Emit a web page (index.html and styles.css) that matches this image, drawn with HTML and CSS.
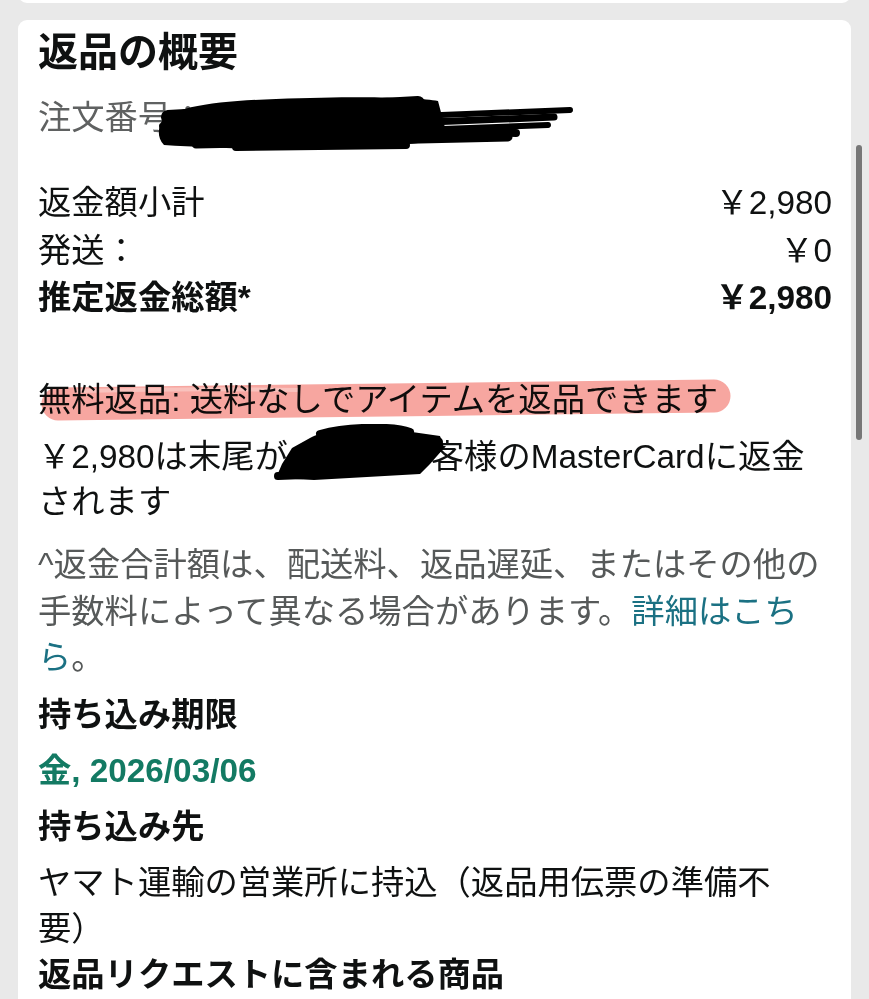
FILE: index.html
```html
<!DOCTYPE html>
<html lang="ja">
<head>
<meta charset="utf-8">
<title>返品の概要</title>
<link rel="stylesheet" href="styles.css">
</head>
<body>
<div class="page">
  <div class="card card-prev"></div>
  <section class="card summary">
    <h1 class="title">返品の概要</h1>
    <p class="order">注文番号：<span class="redact redact-order"><svg width="420" height="58" viewBox="0 0 420 58"><path d="M4 30 C10 12 60 6 120 4 C200 1 262 2 282 6 L292 44 C220 56 100 56 8 50 C2 44 2 36 4 30 Z" fill="#000"/><g stroke="#000" stroke-linecap="round" fill="none"><path d="M12 22 L262 8" stroke-width="14"/><path d="M6 31 L414 15" stroke-width="6"/><path d="M10 38 L398 22" stroke-width="7"/><path d="M14 44 L392 30" stroke-width="6"/><path d="M40 49 L352 42" stroke-width="9"/><path d="M80 52 L250 50" stroke-width="8"/><path d="M240 36 L360 38" stroke-width="8"/></g></svg></span></p>

    <div class="totals">
      <div class="row"><span>返金額小計</span><span>￥2,980</span></div>
      <div class="row"><span>発送：</span><span>￥0</span></div>
      <div class="row strong"><span>推定返金総額*</span><span>￥2,980</span></div>
    </div>

    <p class="free">無料返品: 送料なしでアイテムを返品できます<svg class="marker" width="720" height="50" viewBox="0 0 720 50"><path d="M20 27 C200 24 480 22 676 19" stroke="#f7a6a0" stroke-width="33" stroke-linecap="round" fill="none"/><path d="M40 14 C120 12 200 12 260 13" stroke="#f9c2bd" stroke-width="4" stroke-linecap="round" fill="none"/></svg></p>

    <p class="refund">￥2,980は末尾が<span class="redact redact-card"><svg width="196" height="60" viewBox="0 0 196 60"><path d="M40 14 C60 2 130 0 142 8 L170 12 L174 24 L160 40 L150 50 L44 56 L6 54 L12 40 L22 24 Z" fill="#000"/><g stroke="#000" stroke-linecap="round" fill="none"><path d="M50 10 C80 2 125 2 140 8" stroke-width="8"/><path d="M8 52 L60 50" stroke-width="8"/><path d="M140 14 L168 18" stroke-width="10"/></g></svg></span>客様のMasterCardに返金されます</p>

    <p class="note">^返金合計額は、配送料、返品遅延、またはその他の手数料によって異なる場合があります。<a class="link" href="#">詳細はこちら</a>。</p>

    <h2 class="heading">持ち込み期限</h2>
    <p class="date">金, 2026/03/06</p>
    <h2 class="heading">持ち込み先</h2>
    <p class="place">ヤマト運輸の営業所に持込（返品用伝票の準備不要）</p>
    <h2 class="heading">返品リクエストに含まれる商品</h2>
  </section>
</div>
<div class="scroll-thumb"></div>
</body>
</html>
```

FILE: styles.css
```css
html, body {
  margin: 0;
  padding: 0;
  height: 100%;
  overflow: hidden;
  background: #e9e9e9;
}

body {
  font-family: "Liberation Sans", "Noto Sans CJK JP", sans-serif;
  color: #0f1111;
  font-size: 33.3px;
}

.page {
  padding: 0 18px;
}

.card {
  background: #fff;
  border-radius: 9px;
}

.card-prev {
  height: 30px;
  margin-top: -27px;
}

.summary {
  margin-top: 17px;
  padding: 6px 19px 40px 20px;
}

.title {
  margin: 0;
  font-size: 40px;
  line-height: 52px;
  font-weight: 700;
}

p, h2 {
  margin: 0;
}

.order {
  margin-top: 17px;
  line-height: 46px;
  color: #5f6161;
  white-space: nowrap;
}

.redact {
  position: relative;
  display: inline-block;
  vertical-align: top;
}

.redact svg {
  position: absolute;
  display: block;
}

.redact-order {
  width: 0;
  height: 46px;
}

.redact-order svg {
  left: -48px;
  top: 0;
}

.totals {
  margin-top: 38px;
}

.row {
  display: flex;
  justify-content: space-between;
  line-height: 47.5px;
}

.strong {
  font-weight: 700;
}

.free {
  position: relative;
  margin-top: 55px;
  line-height: 46px;
}

.marker {
  position: absolute;
  left: 0;
  top: 0;
  mix-blend-mode: multiply;
  pointer-events: none;
}

.refund {
  margin-top: 11.5px;
  line-height: 45px;
}

.redact-card {
  width: 143px;
  height: 45px;
}

.redact-card svg {
  left: -18px;
  top: -10px;
}

.note {
  margin-top: 18px;
  line-height: 46.5px;
  color: #565959;
}

.link {
  color: #1b7183;
  text-decoration: none;
}

.heading {
  font-size: 33.3px;
  font-weight: 700;
  line-height: 46px;
  margin-top: 10px;
}

.date {
  margin-top: 10px;
  line-height: 46px;
  font-weight: 700;
  color: #137a63;
}

.place {
  margin-top: 10px;
  line-height: 46px;
  max-width: 750px;
}

.place + .heading {
  margin-top: 0;
}

.scroll-thumb {
  position: fixed;
  left: 856px;
  top: 145px;
  width: 6px;
  height: 295px;
  border-radius: 3px;
  background: #777;
}
```
